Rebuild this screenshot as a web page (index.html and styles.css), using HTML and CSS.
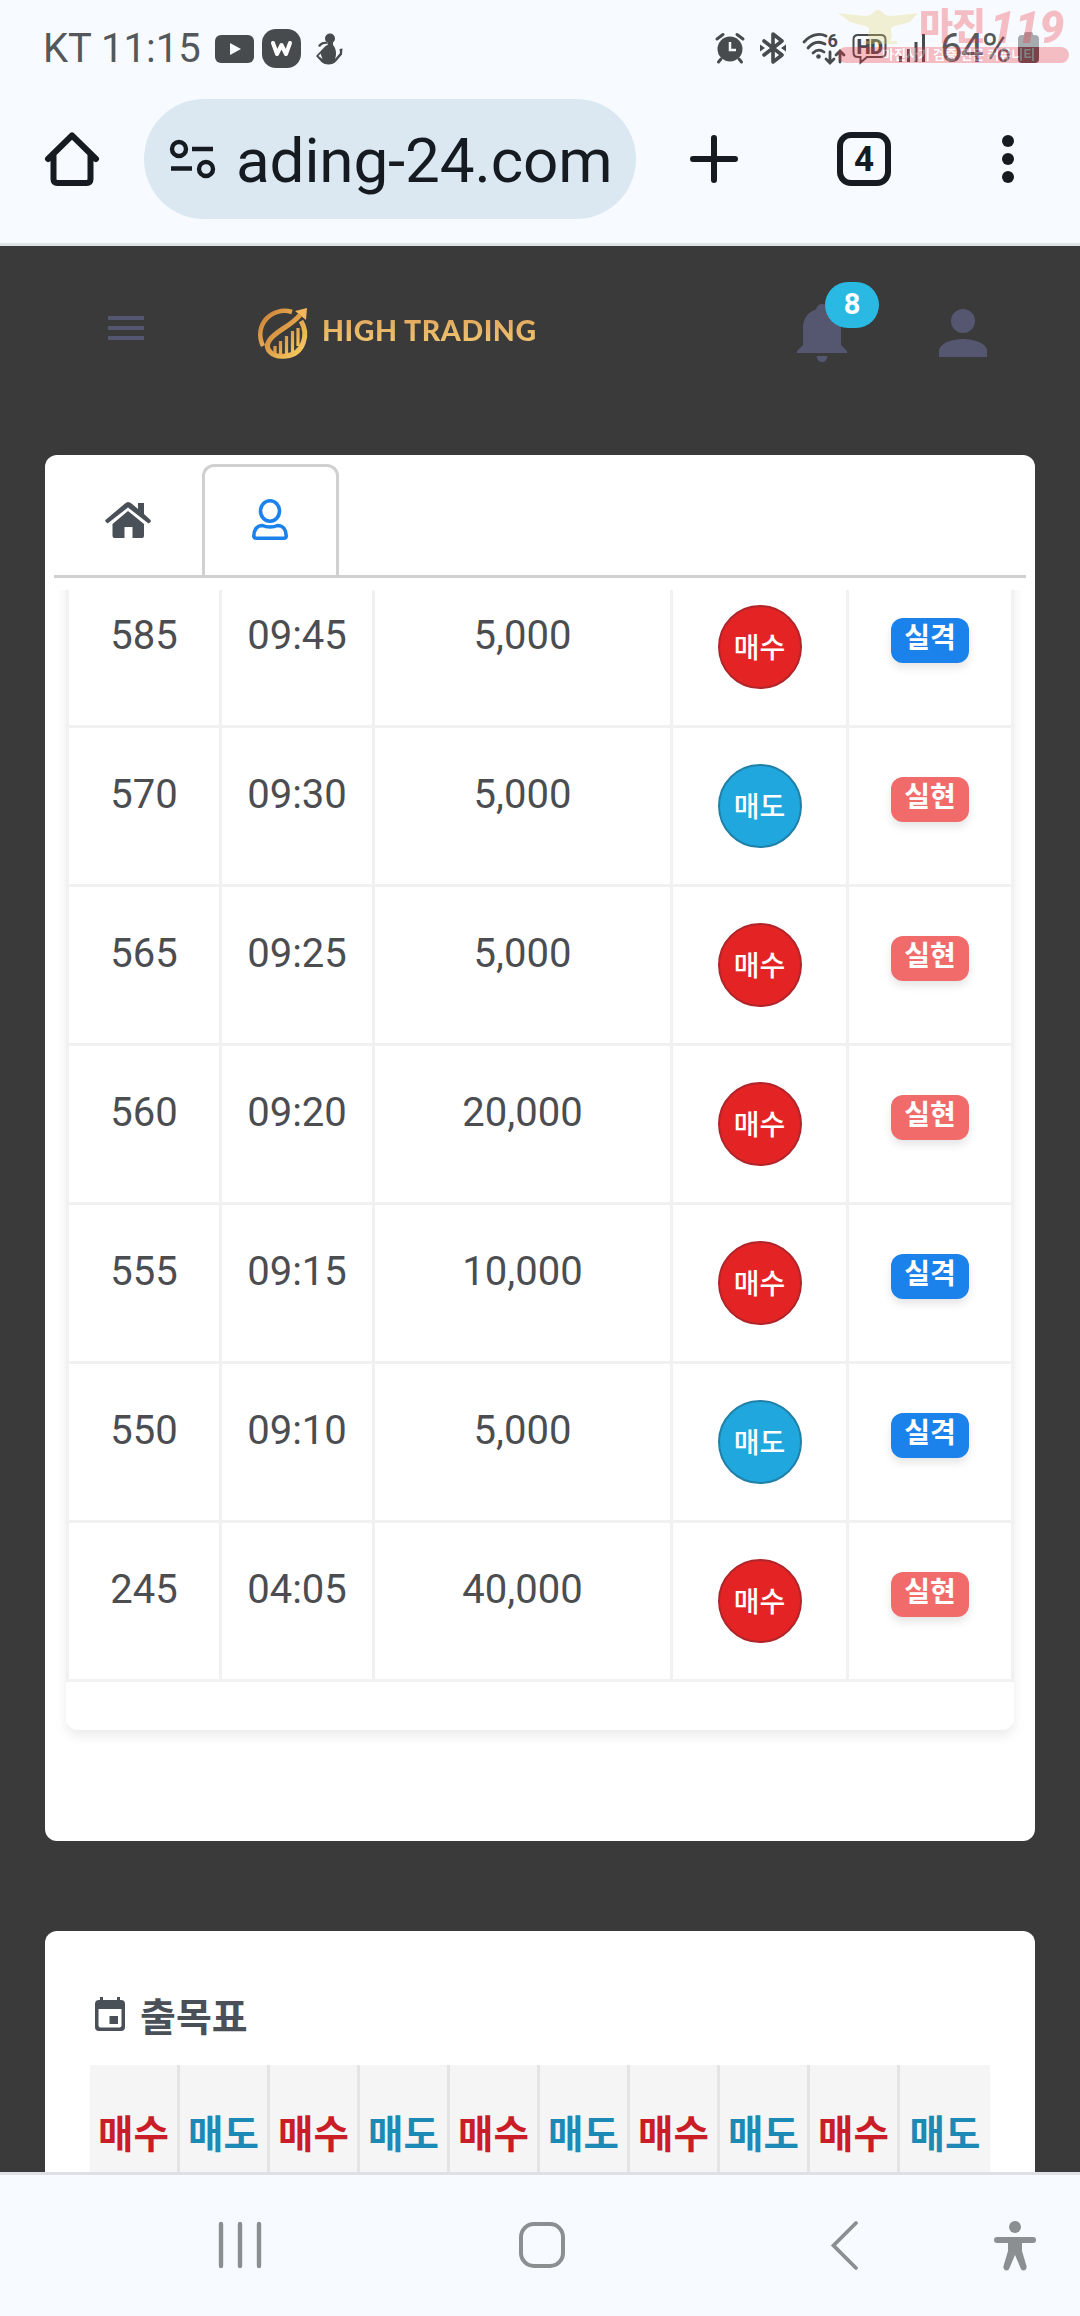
FILE: index.html
```html
<!DOCTYPE html>
<html lang="ko">
<head>
    <meta charset="UTF-8">
    <meta name="viewport" content="width=device-width, initial-scale=1.0">
    <title>HIGH TRADING</title>
    <link rel="stylesheet" href="styles.css">
</head>
<body>
    <div class="status-bar">
        <span class="status-text">KT 11:15</span>
        <svg class="ic-youtube" width="39" height="28" viewBox="0 0 39 28"><rect width="39" height="28" rx="6" fill="#474b4e"/><path d="M15 8l11 6-11 6z" fill="#f7fbff"/></svg>
        <svg class="ic-w" width="39" height="39" viewBox="0 0 39 39"><rect width="39" height="39" rx="14" fill="#474b4e"/><path d="M11 14l4 11 4.500-9 4.500 9 4-11" fill="none" stroke="#fff" stroke-width="4" stroke-linecap="round" stroke-linejoin="round"/></svg>
        <svg class="ic-figure" width="28" height="32" viewBox="0 0 28 32" fill="#474b4e"><circle cx="15" cy="5.500" r="5"/><path d="M13 8h5v4c3 3 4 9 2 14l5-6-.5-4 3-.5-.5 6-6 7c-3 4-12 4-15 0l-5-5.500 9-9.500 3-2zM5.500 20.500l-2 2.500 4 3z"/><path d="M3 13q3-5 9-4l1 2q-5-1-8 3z"/></svg>
        <div class="status-right">
            <svg class="ic-alarm" width="30" height="30" viewBox="0 0 30 30"><circle cx="15" cy="16" r="12.500" fill="#474b4e"/><path d="M2 6l6-4.500M28 6l-6-4.500M6 26l-2.500 3M24 26l2.500 3" stroke="#474b4e" stroke-width="3" stroke-linecap="round"/><path d="M15 9v8h6" fill="none" stroke="#f7fbff" stroke-width="2.500"/></svg>
            <svg class="ic-bt" width="28" height="32" viewBox="0 0 28 32"><path d="M5 9l18 14-9 7V2l9 7L5 23" fill="none" stroke="#474b4e" stroke-width="3.600" stroke-linejoin="round" stroke-linecap="round"/><path d="M1 12.500l5 3.500-5 3.500zM27 12.500l-5 3.500 5 3.500z" fill="#474b4e"/></svg>
            <svg class="ic-wifi" width="43" height="33" viewBox="0 0 43 33"><g fill="none" stroke="#474b4e" stroke-width="2.800" stroke-linecap="round"><path d="M2 10c7-8 16-9 22-6M6 16c5-6 11-7 17-4M11 21c3-3 7-4 11-1"/><path d="M28 20v10M24 27l4 4 4-4M38 30V20M34 23l4-4 4 4"/></g><circle cx="16.500" cy="24.500" r="2.300" fill="#474b4e"/><text x="25.500" y="14.500" class="wifi-gen">6</text></svg>
            <svg class="ic-hd" width="35" height="32" viewBox="0 0 35 32"><path d="M6 2h23q4.500 0 4.500 4.500v13q0 4.500-4.500 4.500H15l-6.500 5.500V24H6q-4.500 0-4.500-4.500v-13Q1.500 2 6 2z" fill="none" stroke="#474b4e" stroke-width="2"/><text x="4.500" y="20.500" class="hd-text">HD</text></svg>
            <svg class="ic-signal" width="28" height="30" viewBox="0 0 28 30" fill="#474b4e"><path d="M1 23h3v6H1zM9 16h3v13H9zM16.500 9h3v20h-3zM24 1h3v28h-3z"/></svg>
            <span class="battery-text">64%</span>
            <svg class="ic-battery" width="21" height="32" viewBox="0 0 21 32"><path d="M6 3V2q0-2 2-2h5q2 0 2 2v1h2q4 0 4 4v9H0V7q0-4 4-4z" fill="#a5abae"/><path d="M0 15h21v12q0 4-4 4H4q-4 0-4-4z" fill="#474b4e"/></svg>
        </div>
        <div class="watermark">
            <svg class="wm-eagle" width="80" height="36" viewBox="0 0 80 36"><path d="M0 3l26 3q5 0 8-2 6-8 12 0 3 2 8 2l26-3-8 9-18 5-1 3q2 8-1 11h7v3H25v-3h7q-3-3-1-11l-1-3-18-5z" fill="#e6d470"/></svg>
            <span class="wm-name">마진</span>
            <span class="wm-num">119</span>
            <div class="wm-strip">마진사기 검증 전문 커뮤니티</div>
        </div>
    </div>

    <div class="browser-bar">
        <svg class="ic-home" width="54" height="54" viewBox="0 0 54 54"><path d="M3 27L27 3.500 51 27M8.500 23v24q0 4 4 4h29q4 0 4-4V23" fill="none" stroke="#151b20" stroke-width="6" stroke-linecap="round" stroke-linejoin="round"/></svg>
        <div class="url-pill">
            <svg width="46" height="39" viewBox="0 0 46 39" fill="none" stroke="#151b20" stroke-width="4.400"><circle cx="9" cy="9" r="7"/><circle cx="36" cy="29" r="7"/><path d="M22 9h21M1 28.500h21"/></svg>
            <span class="url-text">ading-24.com</span>
        </div>
        <svg class="ic-plus" width="48" height="48" viewBox="0 0 48 48"><path d="M24 3v42M3 24h42" stroke="#151b20" stroke-width="6" stroke-linecap="round"/></svg>
        <div class="tab-count">4</div>
        <svg class="ic-dots" width="12" height="48" viewBox="0 0 12 48" fill="#151b20"><circle cx="6" cy="6" r="6"/><circle cx="6" cy="24" r="6"/><circle cx="6" cy="42" r="6"/></svg>
    </div>

    <main>
        <header>
            <div class="menu-button"><i></i><i></i><i></i></div>
            <div class="logo">
                <svg width="50" height="51" viewBox="0 0 50 51">
                    <defs><linearGradient id="gold" x1="0" y1="0" x2="1" y2="1"><stop offset="0" stop-color="#c97a35"/><stop offset="1" stop-color="#fbd062"/></linearGradient></defs>
                    <g fill="none" stroke="url(#gold)">
                        <path d="M5 38C-5 17 14-2 34 4" stroke-width="4.500"/>
                        <path d="M43 13c8 13 3 33-15 35-14 2-22-7-17-15C17 23 32 19 42 7" stroke-width="5"/>
                        <path d="M17 46v-8M22.500 47V33M28.500 47V28M34.500 44V23M40 38V20" stroke-width="3.200"/>
                    </g>
                    <path d="M37 3l12-3-1 12z" fill="#f2b55a"/>
                </svg>
                <span>HIGH TRADING</span>
            </div>
            <div class="bell">
                <svg width="50" height="58" viewBox="0 0 50 58" fill="#555770"><path d="M25 0q5 0 6 5.500C40 8 44 16 44 24v17l6 6v2H0v-2l6-6V24C6 16 10 8 19 5.500 20 0 25 0 25 0z"/><path d="M19.500 52h11q-1 6-5.500 6t-5.500-6z"/></svg>
                <span class="bell-count">8</span>
            </div>
            <svg class="ic-account" width="48" height="48" viewBox="0 0 48 48" fill="#555770"><circle cx="24" cy="12" r="12"/><path d="M0 48v-6c0-8 14-12 24-12s24 4 24 12v6z"/></svg>
        </header>

        <section class="card trade-card">
            <div class="tabs">
                <div class="tab">
                    <svg width="46" height="36" viewBox="0 0 46 36" fill="#495057"><path d="M23 0q2 0 3.500 1.500L33 7V1h6v11l6.500 6q1 1-.5 2.500l-1.500 1L23 5.500 2.500 21.500l-2-2q-.8-1 .5-2L20 1.500Q21.500 0 23 0z"/><path d="M23 9l16 13v12q0 2-2 2h-9.500V25h-8v11H9.500q-2 0-2-2V22z"/></svg>
                </div>
                <div class="tab active">
                    <svg width="36" height="41" viewBox="0 0 36 41" fill="none" stroke="#1b82ec" stroke-width="3.600"><ellipse cx="18" cy="12" rx="9.500" ry="10.200"/><path d="M10.500 26.500c4 2 11 2 15 0 6 0 8.700 5 8.700 10.500q0 2.200-2.500 2.200H4.300q-2.500 0-2.500-2.200C1.800 31.500 4.500 26.500 10.500 26.500z"/></svg>
                </div>
            </div>
            <div class="table-scroll">
                <div class="table-box">
                    <table class="trade-table">
                        <tbody>
                            <tr><td>585</td><td>09:45</td><td>5,000</td><td><span class="circle buy">매수</span></td><td><span class="badge lose">실격</span></td></tr>
                            <tr><td>570</td><td>09:30</td><td>5,000</td><td><span class="circle sell">매도</span></td><td><span class="badge win">실현</span></td></tr>
                            <tr><td>565</td><td>09:25</td><td>5,000</td><td><span class="circle buy">매수</span></td><td><span class="badge win">실현</span></td></tr>
                            <tr><td>560</td><td>09:20</td><td>20,000</td><td><span class="circle buy">매수</span></td><td><span class="badge win">실현</span></td></tr>
                            <tr><td>555</td><td>09:15</td><td>10,000</td><td><span class="circle buy">매수</span></td><td><span class="badge lose">실격</span></td></tr>
                            <tr><td>550</td><td>09:10</td><td>5,000</td><td><span class="circle sell">매도</span></td><td><span class="badge lose">실격</span></td></tr>
                            <tr><td>245</td><td>04:05</td><td>40,000</td><td><span class="circle buy">매수</span></td><td><span class="badge win">실현</span></td></tr>
                        </tbody>
                    </table>
                </div>
            </div>
        </section>

        <section class="card result-card">
            <h2>
                <svg width="30" height="34" viewBox="0 0 30 34" fill="#495057"><path d="M5 0h3v3h14V0h3v3h1q4 0 4 4v23q0 4-4 4H4q-4 0-4-4V7q0-4 4-4h1zM3.500 12v16.500q0 2 2 2h19q2 0 2-2V12z" fill-rule="evenodd"/><path d="M14.500 19H23v8h-8.500z"/></svg>
                출목표
            </h2>
            <div class="result-head">
                <span class="up">매수</span><span class="down">매도</span><span class="up">매수</span><span class="down">매도</span><span class="up">매수</span><span class="down">매도</span><span class="up">매수</span><span class="down">매도</span><span class="up">매수</span><span class="down">매도</span>
            </div>
        </section>
    </main>

    <nav class="nav-bar">
        <svg class="nav-recent" width="42" height="46" viewBox="0 0 42 46"><path d="M2 2v42M21 2v42M40 2v42" stroke="#8b8f92" stroke-width="4.400" stroke-linecap="round"/></svg>
        <svg class="nav-home" width="46" height="46" viewBox="0 0 46 46"><rect x="2" y="2" width="42" height="42" rx="13" fill="none" stroke="#8b8f92" stroke-width="4"/></svg>
        <svg class="nav-back" width="27" height="49" viewBox="0 0 27 49"><path d="M25 2L2.500 24.500 25 47" fill="none" stroke="#8b8f92" stroke-width="3.800" stroke-linecap="round"/></svg>
        <svg class="nav-access" width="42" height="50" viewBox="0 0 42 50"><circle cx="21" cy="6" r="6" fill="#8b8f92"/><path d="M3 19h36" stroke="#8b8f92" stroke-width="6" stroke-linecap="round"/><path d="M14 19h14v11l4.500 15q.5 4-2.500 4.500-2.500.5-3.500-2.500L21 34l-5.500 13q-1 3-3.500 2.500-3-.5-2.500-4.500L14 30z" fill="#8b8f92"/></svg>
    </nav>
</body>
</html>
```
FILE: styles.css
```css
/* Base */
* {
    box-sizing: border-box;
}
body {
    margin: 0;
    height: 2316px;
    display: flex;
    flex-direction: column;
    overflow: hidden;
    font-family: Roboto, "Noto Sans CJK KR", sans-serif;
    background-color: #f7fbff;
    color: #495057;
}
svg {
    display: block;
    flex-shrink: 0;
    overflow: visible;
}

/* Status bar */
.status-bar {
    position: relative;
    display: flex;
    align-items: flex-start;
    height: 99px;
    padding: 29px 41px 0 43px;
    color: #54585b;
}
.status-text {
    width: 172px;
    font-size: 40px;
    line-height: 40px;
    white-space: nowrap;
}
.ic-youtube {
    margin-top: 6px;
}
.ic-w {
    margin-left: 8px;
}
.ic-figure {
    margin: 4px 0 0 14px;
}
.status-right {
    display: flex;
    align-items: flex-start;
    margin-left: auto;
}
.ic-alarm {
    margin: 4px 14px 0 0;
}
.ic-bt {
    margin: 3px 15px 0 0;
}
.ic-wifi {
    margin: 3px 7px 0 0;
}
.ic-hd {
    margin: 4px 11px 0 0;
}
.ic-signal {
    margin: 4px 14px 0 0;
}
.ic-battery {
    margin-top: 3px;
}
.battery-text {
    width: 78px;
    font-size: 40px;
    line-height: 40px;
    letter-spacing: -1.5px;
}
.wifi-gen {
    font-size: 18px;
    font-weight: 700;
    fill: #474b4e;
}
.hd-text {
    font-size: 20px;
    font-weight: 900;
    fill: #474b4e;
    letter-spacing: -0.5px;
}

/* Watermark */
.watermark {
    position: absolute;
    left: 838px;
    top: 10px;
    width: 232px;
    height: 54px;
    opacity: 0.3;
    color: #f0303c;
}
.wm-eagle {
    position: absolute;
    left: 0;
    top: 0;
}
.wm-name {
    position: absolute;
    left: 81px;
    top: 0;
    font-size: 37px;
    font-weight: 900;
    line-height: 36px;
    letter-spacing: -1px;
}
.wm-num {
    position: absolute;
    left: 152px;
    top: 0;
    font-size: 44px;
    font-style: italic;
    font-weight: 900;
    line-height: 36px;
}
.wm-strip {
    position: absolute;
    left: 0;
    top: 37px;
    width: 231px;
    height: 16px;
    border-radius: 8px;
    background-color: #f0303c;
    color: white;
    font-size: 13px;
    font-weight: 700;
    line-height: 16px;
    padding-left: 44px;
    white-space: nowrap;
}

/* Browser bar */
.browser-bar {
    display: flex;
    align-items: center;
    height: 147px;
    padding: 0 66px 24px 45px;
    border-bottom: 3px solid #dce4e6;
}
.url-pill {
    display: flex;
    align-items: center;
    width: 492px;
    height: 120px;
    margin-left: 45px;
    padding-left: 26px;
    border-radius: 60px;
    background-color: #dbe8f1;
}
.url-text {
    margin: 4px 0 0 20px;
    font-size: 62px;
    line-height: 80px;
    letter-spacing: -0.15px;
    color: #151b20;
    white-space: nowrap;
}
.ic-plus {
    margin-left: 54px;
}
.tab-count {
    width: 54px;
    height: 54px;
    margin-left: 99px;
    border: 6px solid #151b20;
    border-radius: 14px;
    font-size: 35px;
    font-weight: 700;
    line-height: 43px;
    text-align: center;
    color: #151b20;
}
.ic-dots {
    margin-left: auto;
}

/* Page */
main {
    flex: 1;
    min-height: 0;
    overflow: hidden;
    padding: 0 45px;
    background-color: #3a3a3a;
}
header {
    display: flex;
    align-items: flex-start;
    height: 209px;
    padding: 58px 48px 0 63px;
}
.menu-button {
    display: flex;
    flex-direction: column;
    gap: 6px;
    width: 36px;
    margin-top: 12px;
}
.menu-button i {
    height: 4px;
    background-color: #555770;
}
.logo {
    display: flex;
    align-items: center;
    margin: 4px 0 0 114px;
}
.logo span {
    margin: 0 0 7px 14px;
    font-family: Lato, sans-serif;
    font-size: 28.5px;
    font-weight: 900;
    line-height: 40px;
    letter-spacing: 0.55px;
    white-space: nowrap;
    color: transparent;
    background: linear-gradient(#e0a05a, #f0cc74);
    background-clip: text;
    -webkit-background-clip: text;
}
.bell {
    position: relative;
    margin-left: auto;
}
.bell-count {
    position: absolute;
    left: 28px;
    top: -22px;
    width: 54px;
    height: 46px;
    border-radius: 23px;
    background-color: #2ab9e3;
    color: white;
    font-size: 29px;
    font-weight: 700;
    line-height: 45px;
    text-align: center;
}
.ic-account {
    margin: 5px 0 0 92px;
}
.card {
    background-color: white;
    border-radius: 12px;
}

/* Trade list */
.trade-card {
    height: 1386px;
    padding: 9px;
    margin-bottom: 90px;
}
.tabs {
    display: flex;
    height: 114px;
    border-bottom: 3px solid #d0d0d0;
}
.tab {
    display: flex;
    align-items: center;
    justify-content: center;
    width: 148px;
}
.tab.active {
    width: 137px;
    padding: 0 2px 4px 0;
    border: 3px solid #d0d0d0;
    border-bottom: none;
    border-radius: 12px 12px 0 0;
}
.table-scroll {
    height: 1200px;
    margin-top: 12px;
    padding: 0 12px;
    overflow: hidden;
}
.table-box {
    height: 1161px;
    margin-top: -21px;
    border-radius: 12px;
    box-shadow: 0 6px 12px rgba(18, 18, 18, 0.08);
}
.trade-table {
    width: 948px;
    table-layout: fixed;
    border-collapse: separate;
    border-spacing: 0;
    color: #4b4d50;
}
.trade-table td {
    width: 153px;
    height: 159px;
    padding: 36px 0 0;
    border-left: 3px solid #f1f1f1;
    border-bottom: 3px solid #f1f1f1;
    font-size: 40px;
    line-height: 62px;
    text-align: center;
    vertical-align: top;
}
.trade-table td:nth-child(3) {
    width: 298px;
}
.trade-table td:nth-child(4) {
    width: 176px;
}
.trade-table td:nth-child(5) {
    width: 168px;
    border-right: 3px solid #f1f1f1;
}
.circle {
    display: block;
    width: 84px;
    height: 84px;
    margin: 0 auto;
    border-radius: 50%;
    color: white;
    font-size: 28px;
    font-weight: 500;
    line-height: 83px;
}
.circle.buy {
    background-color: #e42424;
    border: 2px solid #b0252a;
}
.circle.sell {
    background-color: #1fa7de;
    border: 2px solid #2080a8;
}
.badge {
    display: block;
    width: 78px;
    height: 45px;
    margin: 13px auto 0;
    border-radius: 12px;
    color: white;
    font-size: 28px;
    font-weight: 700;
    line-height: 41px;
    box-shadow: 0 5px 8px rgba(0, 0, 0, 0.1);
}
.badge.win {
    background-color: #f16b6b;
}
.badge.lose {
    background-color: #1b82ec;
}

/* Result table */
.result-card {
    height: 400px;
    padding: 45px;
}
.result-card h2 {
    display: flex;
    align-items: center;
    gap: 15px;
    height: 75px;
    margin: 0 0 14px;
    padding-left: 5px;
    font-size: 39px;
    font-weight: 700;
}
.result-head {
    display: flex;
    height: 150px;
    background-color: #f5f5f5;
}
.result-head span {
    width: 90px;
    padding-top: 40px;
    border-right: 3px solid #e4e4e4;
    font-size: 38.5px;
    font-weight: 700;
    line-height: 60px;
    text-align: center;
}
.result-head span:last-child {
    border-right: none;
}
.up {
    color: #c91d27;
}
.down {
    color: #1d8ab6;
}

/* Android navigation */
.nav-bar {
    display: flex;
    align-items: flex-start;
    height: 144px;
    padding: 45px 0 0 219px;
    border-top: 3px solid #dedfe9;
}
.nav-recent,
.nav-home {
    margin-top: 2px;
}
.nav-home {
    margin-left: 258px;
}
.nav-back {
    margin: 1px 0 0 266px;
}
.nav-access {
    margin: 1px 0 0 136px;
}
```
